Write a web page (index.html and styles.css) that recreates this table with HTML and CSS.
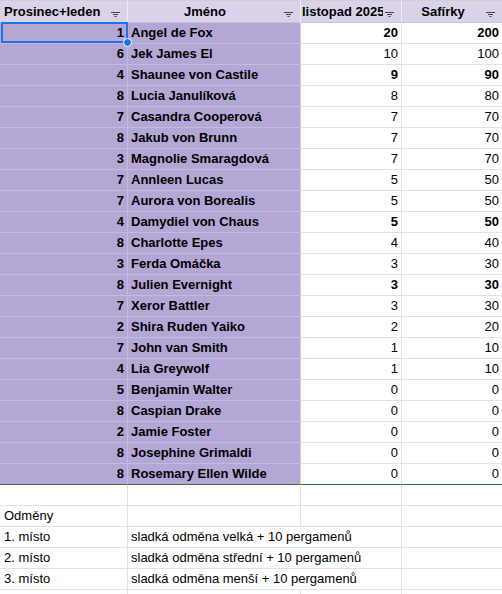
FILE: index.html
```html
<!DOCTYPE html>
<html>
<head>
<meta charset="utf-8">
<link rel="stylesheet" href="styles.css">
</head>
<body>
<div class="sheet">
  <div class="c h ha"><span class="ht left">Prosinec+leden</span><span class="fi"><svg width="9" height="5" viewBox="0 0 9 5"><rect x="0" y="0" width="9" height="1"/><rect x="2" y="2" width="5" height="1"/><rect x="3.5" y="4" width="2" height="1"/></svg></span></div>
  <div class="c h"><span class="ht">Jméno</span><span class="fi"><svg width="9" height="5" viewBox="0 0 9 5"><rect x="0" y="0" width="9" height="1"/><rect x="2" y="2" width="5" height="1"/><rect x="3.5" y="4" width="2" height="1"/></svg></span></div>
  <div class="c h hc"><span class="ht left">listopad 2025</span><span class="fi"><svg width="9" height="5" viewBox="0 0 9 5"><rect x="0" y="0" width="9" height="1"/><rect x="2" y="2" width="5" height="1"/><rect x="3.5" y="4" width="2" height="1"/></svg></span></div>
  <div class="c h"><span class="ht">Safírky</span><span class="fi"><svg width="9" height="5" viewBox="0 0 9 5"><rect x="0" y="0" width="9" height="1"/><rect x="2" y="2" width="5" height="1"/><rect x="3.5" y="4" width="2" height="1"/></svg></span></div>

  <div class="c p num sel">1<span class="selbox"></span><span class="handle"></span></div><div class="c p name">Angel de Fox</div><div class="c w num b">20</div><div class="c w num b">200</div>
  <div class="c p num">6</div><div class="c p name">Jek James El</div><div class="c w num">10</div><div class="c w num">100</div>
  <div class="c p num">4</div><div class="c p name">Shaunee von Castile</div><div class="c w num b">9</div><div class="c w num b">90</div>
  <div class="c p num">8</div><div class="c p name">Lucia Janulíková</div><div class="c w num">8</div><div class="c w num">80</div>
  <div class="c p num">7</div><div class="c p name">Casandra Cooperová</div><div class="c w num">7</div><div class="c w num">70</div>
  <div class="c p num">8</div><div class="c p name">Jakub von Brunn</div><div class="c w num">7</div><div class="c w num">70</div>
  <div class="c p num">3</div><div class="c p name">Magnolie Smaragdová</div><div class="c w num">7</div><div class="c w num">70</div>
  <div class="c p num">7</div><div class="c p name">Annleen Lucas</div><div class="c w num">5</div><div class="c w num">50</div>
  <div class="c p num">7</div><div class="c p name">Aurora von Borealis</div><div class="c w num">5</div><div class="c w num">50</div>
  <div class="c p num">4</div><div class="c p name">Damydiel von Chaus</div><div class="c w num b">5</div><div class="c w num b">50</div>
  <div class="c p num">8</div><div class="c p name">Charlotte Epes</div><div class="c w num">4</div><div class="c w num">40</div>
  <div class="c p num">3</div><div class="c p name">Ferda Omáčka</div><div class="c w num">3</div><div class="c w num">30</div>
  <div class="c p num">8</div><div class="c p name">Julien Evernight</div><div class="c w num b">3</div><div class="c w num b">30</div>
  <div class="c p num">7</div><div class="c p name">Xeror Battler</div><div class="c w num">3</div><div class="c w num">30</div>
  <div class="c p num">2</div><div class="c p name">Shira Ruden Yaiko</div><div class="c w num">2</div><div class="c w num">20</div>
  <div class="c p num">7</div><div class="c p name">John van Smith</div><div class="c w num">1</div><div class="c w num">10</div>
  <div class="c p num">4</div><div class="c p name">Lia Greywolf</div><div class="c w num">1</div><div class="c w num">10</div>
  <div class="c p num">5</div><div class="c p name">Benjamin Walter</div><div class="c w num">0</div><div class="c w num">0</div>
  <div class="c p num">8</div><div class="c p name">Caspian Drake</div><div class="c w num">0</div><div class="c w num">0</div>
  <div class="c p num">2</div><div class="c p name">Jamie Foster</div><div class="c w num">0</div><div class="c w num">0</div>
  <div class="c p num">8</div><div class="c p name">Josephine Grimaldi</div><div class="c w num">0</div><div class="c w num">0</div>
  <div class="c p num last">8</div><div class="c p name last">Rosemary Ellen Wilde</div><div class="c w num last">0</div><div class="c w num last">0</div>

  <div class="c e"></div><div class="c e"></div><div class="c e"></div><div class="c e"></div>
  <div class="c e txt">Odměny</div><div class="c e"></div><div class="c e"></div><div class="c e"></div>
  <div class="c e txt">1. místo</div><div class="c e txt span2">sladká odměna velká + 10 pergamenů</div><div class="c e"></div>
  <div class="c e txt">2. místo</div><div class="c e txt span2">sladká odměna střední + 10 pergamenů</div><div class="c e"></div>
  <div class="c e txt">3. místo</div><div class="c e txt span2">sladká odměna menší + 10 pergamenů</div><div class="c e"></div>
  <div class="c e"></div><div class="c e"></div><div class="c e"></div><div class="c e"></div>
</div>
</body>
</html>
```
FILE: styles.css
```css
html, body {
  margin: 0;
  padding: 0;
  background: #ffffff;
  overflow: hidden;
}
.sheet {
  display: grid;
  grid-template-columns: 128px 173px 101px 101px;
  font-family: "Liberation Sans", Arial, sans-serif;
  font-size: 13px;
  color: #000;
  width: 503px;
}
.c {
  box-sizing: border-box;
  height: 21px;
  line-height: 20px;
  border-right: 1px solid #e2e2e2;
  border-bottom: 1px solid #e2e2e2;
  white-space: nowrap;
  overflow: hidden;
}
.h {
  height: 23px;
  background: #d9d2e9;
  border-top: 1px solid #d0d0d0;
  border-right-color: #eeeaf6;
  border-bottom-color: #c9c1df;
  font-weight: bold;
  display: flex;
  align-items: flex-start;
  padding-top: 1px;
  line-height: 20px;
}
.ht {
  flex: 1;
  text-align: center;
  overflow: hidden;
  white-space: nowrap;
}
.ht.left {
  text-align: left;
}
.ha .ht { padding-left: 4px; }
.hc .ht { padding-left: 1px; }
.fi {
  flex: 0 0 auto;
  width: 9px;
  padding: 0 7px 0 2px;
  margin-top: 10px;
  line-height: 0;
}
.fi svg { display: block; fill: #444; }
.p {
  background: #b4a7d6;
  border-bottom-color: #c4bae0;
  border-right-color: #c4bae0;
  font-weight: bold;
}
.name {
  padding-left: 3px;
  border-right-color: #cfcfcf;
}
.num {
  text-align: right;
  padding-right: 3px;
}
.w { background: #fff; }
.b { font-weight: bold; }
.last { border-bottom: 1px solid #2d7a3a; }
.e { background: #fff; }
.txt { padding-left: 4px; overflow: visible; }
.span2 { grid-column: span 2; padding-left: 3px; }
.sel {
  position: relative;
  overflow: visible;
}
.selbox {
  position: absolute;
  left: 1px;
  top: -1px;
  width: 127px;
  height: 21px;
  box-sizing: border-box;
  border: 2px solid #1a73e8;
}
.handle {
  position: absolute;
  left: 123px;
  top: 15px;
  width: 9px;
  height: 9px;
  box-sizing: border-box;
  border-radius: 50%;
  background: #1a73e8;
  border: 1px solid #fff;
  z-index: 2;
}
```
